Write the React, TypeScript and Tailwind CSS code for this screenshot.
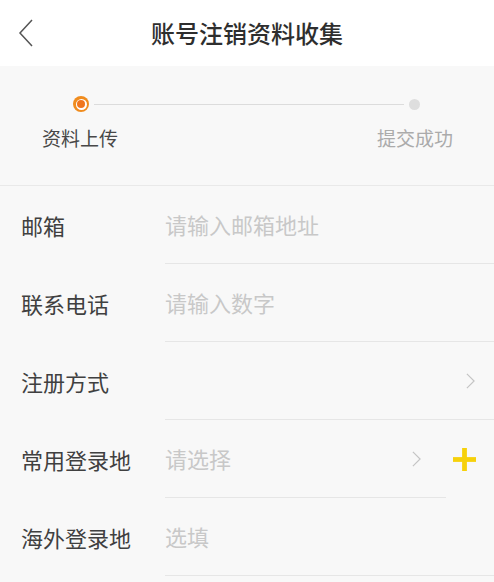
import React from 'react';

const font = { fontFamily: '"Noto Sans CJK SC", "Noto Sans", sans-serif' };

const Chevron: React.FC<{ className?: string }> = ({ className }) => (
  <svg viewBox="0 0 10 18" className={className} fill="none" stroke="currentColor" strokeWidth="1.3">
    <path d="M1 1l8 8-8 8" />
  </svg>
);

type RowProps = {
  label: string;
  placeholder?: string;
  arrow?: boolean;
  plus?: boolean;
};

const Row: React.FC<RowProps> = ({ label, placeholder, arrow, plus }) => (
  <div className="flex h-[78px]">
    <div className="w-[165px] shrink-0 pl-[21px] flex items-center text-[22px] text-[#404040]">
      {label}
    </div>
    <div className={`flex-1 flex items-center border-b border-[#e6e6e6] ${plus ? 'pr-[25px]' : 'pr-[19px]'}`}>
      <span className="flex-1 text-[22px] text-[#c8c8c8]">{placeholder}</span>
      {arrow && <Chevron className="w-[9px] h-[18px] text-[#c4c4c4]" />}
    </div>
    {plus && (
      <div className="w-[48px] shrink-0 flex items-center pl-[7px]">
        <svg viewBox="0 0 24 24" className="w-[23px] h-[23px]">
          <rect x="0" y="9.5" width="24" height="5" fill="#f6d10b" />
          <rect x="9.5" y="0" width="5" height="24" fill="#f6d10b" />
        </svg>
      </div>
    )}
  </div>
);

export default function App() {
  return (
    <div className="w-[494px] h-[582px] bg-[#f8f8f8] overflow-hidden" style={font}>
      <div className="relative h-[66px] bg-white flex items-center justify-center">
        <svg viewBox="0 0 16 28" className="absolute left-[18px] top-[19px] w-[16px] h-[28px]" fill="none" stroke="#555" strokeWidth="1.5">
          <path d="M14 1L2 14l12 13" />
        </svg>
        <span className="text-[24px] text-[#2e2e2e] font-medium">账号注销资料收集</span>
      </div>

      <div className="h-[120px] border-b border-[#e9e9e9] pt-[30px]">
        <div className="flex items-center pl-[73px] pr-[74px] h-[16px]">
          <div className="w-[16px] h-[16px] rounded-full bg-[#f08c1e] flex items-center justify-center">
            <div className="w-[11px] h-[11px] rounded-full bg-white flex items-center justify-center">
              <div className="w-[8px] h-[8px] rounded-full bg-[#f0761e]" />
            </div>
          </div>
          <div className="flex-1 h-px bg-[#dcdcdc] mx-[5px]" />
          <div className="w-[11px] h-[11px] rounded-full bg-[#dedede]" />
        </div>
        <div className="flex justify-between pl-[42px] pr-[41px] mt-[12px] text-[19px]">
          <span className="text-[#484848]">资料上传</span>
          <span className="text-[#ababab]">提交成功</span>
        </div>
      </div>

      <Row label="邮箱" placeholder="请输入邮箱地址" />
      <Row label="联系电话" placeholder="请输入数字" />
      <Row label="注册方式" arrow />
      <Row label="常用登录地" placeholder="请选择" arrow plus />
      <Row label="海外登录地" placeholder="选填" />
    </div>
  );
}
